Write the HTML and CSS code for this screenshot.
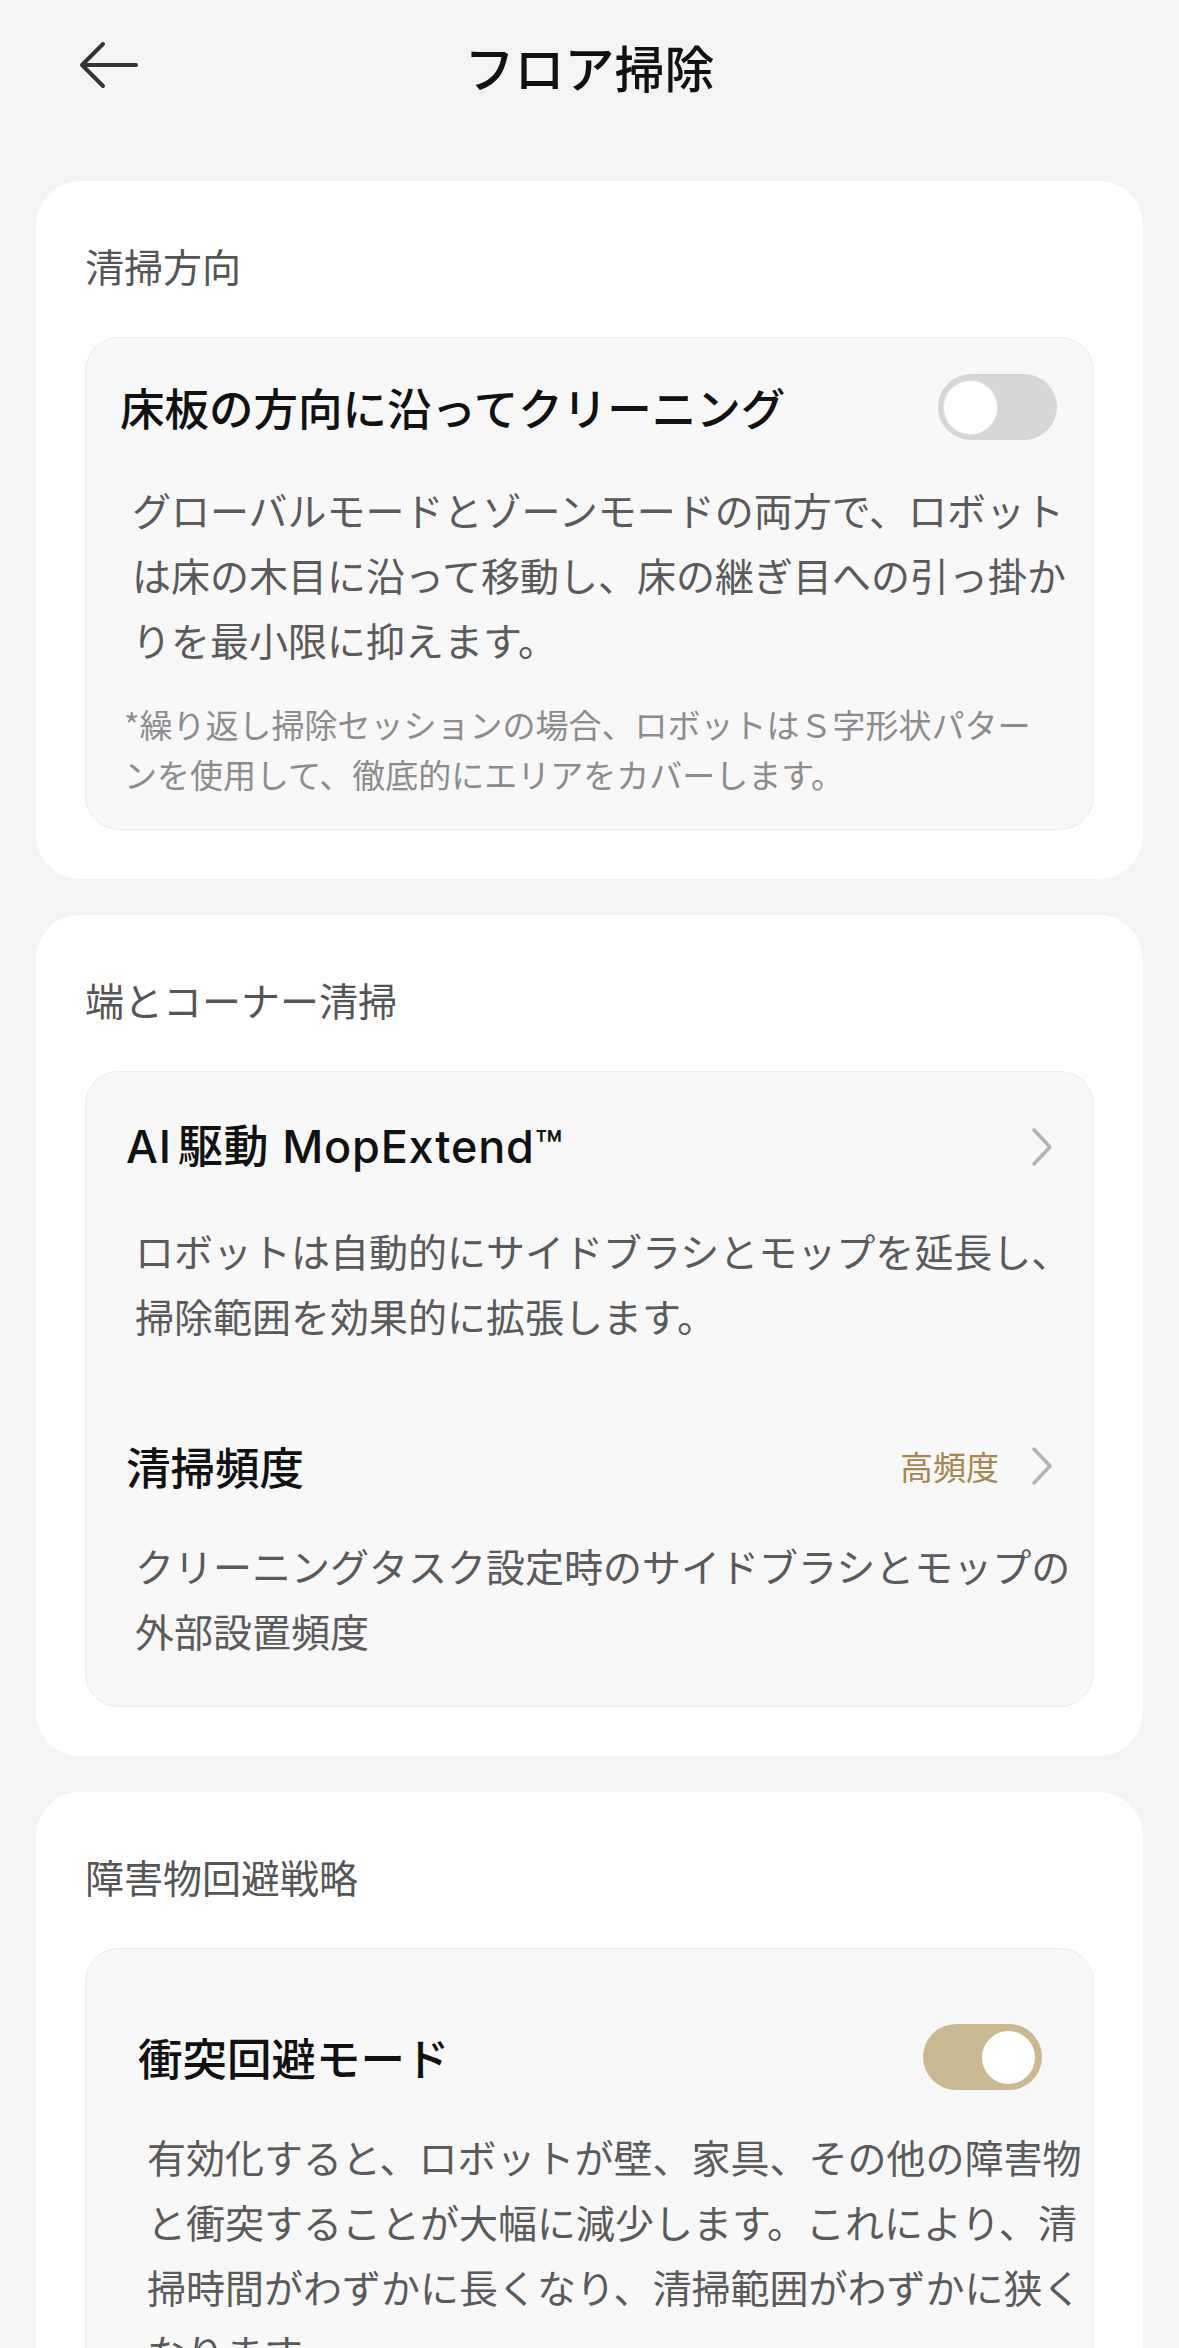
FILE: index.html
```html
<!DOCTYPE html>
<html lang="ja">
<head>
<meta charset="utf-8">
<title>フロア掃除</title>
<link rel="stylesheet" href="styles.css">
</head>
<body>
<header class="topbar">
  <div class="back">
    <svg width="62" height="50" viewBox="0 0 62 50" fill="none" stroke="#333" stroke-width="4" stroke-linecap="round" stroke-linejoin="round">
      <path d="M57 24H4"/>
      <path d="M24 3L3 24L24 45"/>
    </svg>
  </div>
  <h1 class="title">フロア掃除</h1>
  <div></div>
</header>

<main class="content">
  <section class="card">
    <h2 class="section-title">清掃方向</h2>
    <div class="panel panel-direction">
      <div class="row">
        <span class="row-title">床板の方向に沿ってクリーニング</span>
        <span class="toggle"><span class="knob"></span></span>
      </div>
      <p class="desc">グローバルモードとゾーンモードの両方で、ロボットは床の木目に沿って移動し、床の継ぎ目への引っ掛かりを最小限に抑えます。</p>
      <p class="note">*繰り返し掃除セッションの場合、ロボットはＳ字形状パターンを使用して、徹底的にエリアをカバーします。</p>
    </div>
  </section>

  <section class="card">
    <h2 class="section-title">端とコーナー清掃</h2>
    <div class="panel panel-edge">
      <div class="row">
        <span class="row-title latin">AI<span class="thin-gap">駆動</span> MopExtend™</span>
        <svg class="chev" width="22" height="40" viewBox="0 0 22 40" fill="none" stroke="#b3b3b3" stroke-width="3.5" stroke-linecap="round" stroke-linejoin="round"><path d="M3 3L19 20L3 37"/></svg>
      </div>
      <p class="desc">ロボットは自動的にサイドブラシとモップを延長し、掃除範囲を効果的に拡張します。</p>
      <div class="row row-second">
        <span class="row-title">清掃頻度</span>
        <span class="value">
          <span class="value-text">高頻度</span>
          <svg class="chev" width="22" height="40" viewBox="0 0 22 40" fill="none" stroke="#b3b3b3" stroke-width="3.5" stroke-linecap="round" stroke-linejoin="round"><path d="M3 3L19 20L3 37"/></svg>
        </span>
      </div>
      <p class="desc desc-second">クリーニングタスク設定時のサイドブラシとモップの外部設置頻度</p>
    </div>
  </section>

  <section class="card">
    <h2 class="section-title">障害物回避戦略</h2>
    <div class="panel panel-avoid">
      <div class="row">
        <span class="row-title">衝突回避モード</span>
        <span class="toggle on"><span class="knob"></span></span>
      </div>
      <p class="desc">有効化すると、ロボットが壁、家具、その他の障害物と衝突することが大幅に減少します。これにより、清掃時間がわずかに長くなり、清掃範囲がわずかに狭くなります。</p>
    </div>
  </section>
</main>
</body>
</html>
```

FILE: styles.css
```css
* {
  box-sizing: border-box;
}

html, body {
  margin: 0;
  padding: 0;
}

body {
  background: #f4f4f4;
  font-family: "Noto Sans CJK JP", "Noto Sans", sans-serif;
  color: #111;
}

.topbar {
  height: 132px;
  display: grid;
  grid-template-columns: 1fr auto 1fr;
  align-items: center;
  padding: 0 79px;
}

.back {
  display: flex;
  align-items: center;
  height: 50px;
}

.back svg {
  display: block;
}

.title {
  margin: 0;
  font-size: 50px;
  font-weight: 500;
  line-height: 60px;
  color: #111;
}

.content {
  display: flex;
  flex-direction: column;
  gap: 36px;
  padding: 49px 36px 0;
}

.card {
  background: #fff;
  border-radius: 44px;
  padding: 56px 49px 49px;
}

.section-title {
  margin: 0 0 44px;
  font-size: 39px;
  line-height: 56px;
  font-weight: 400;
  color: #555;
}

.panel {
  background: #f8f8f8;
  border: 1px solid #ececec;
  border-radius: 34px;
}

.row {
  display: flex;
  align-items: center;
  justify-content: space-between;
  height: 66px;
}

.row-title {
  font-size: 44.5px;
  font-weight: 500;
  color: #111;
  line-height: 66px;
  white-space: nowrap;
}

.row-title.latin {
  font-family: Inter, "Noto Sans CJK JP", sans-serif;
  font-size: 45px;
  letter-spacing: 0.8px;
}

.thin-gap {
  margin-left: 6px;
}

.desc {
  margin: 0;
  font-size: 39px;
  line-height: 65px;
  color: #5a5a5a;
}

.note {
  margin: 27px 0 0;
  font-size: 33px;
  line-height: 50px;
  color: #8c8c8c;
}

/* toggle */
.toggle {
  width: 119px;
  height: 66px;
  border-radius: 33px;
  background: #d6d6d6;
  display: flex;
  align-items: center;
  padding: 0 6px;
  flex-shrink: 0;
}

.toggle .knob {
  width: 53px;
  height: 53px;
  border-radius: 50%;
  background: #fff;
  box-shadow: 0 0 0 1px #e4e4e4;
}

.toggle.on {
  background: #cab892;
  justify-content: flex-end;
  padding: 0 7px;
}

.toggle.on .knob {
  box-shadow: none;
}

.chev {
  display: block;
  flex-shrink: 0;
}

.value {
  display: flex;
  align-items: center;
  gap: 32px;
}

.value-text {
  font-size: 33px;
  line-height: 50px;
  color: #a8864f;
}

/* panel 1 */
.panel-direction {
  padding: 36px 8px 30px 0;
}

.panel-direction .row {
  padding: 0 28px 0 34px;
}

.panel-direction .desc {
  margin-top: 37px;
  padding-left: 46px;
}

.panel-direction .note {
  padding-left: 38px;
  width: 960px;
}

/* panel 2 */
.panel-edge {
  padding: 42px 8px 43px 0;
}

.panel-edge .row {
  padding: 0 32px 0 40px;
}

.panel-edge .desc {
  margin-top: 38px;
  padding-left: 49px;
}

.panel-edge .row-second {
  margin-top: 85px;
}

.panel-edge .desc-second {
  margin-top: 34px;
}

/* panel 3 */
.panel-avoid {
  padding: 75px 0 60px 0;
}

.panel-avoid .row {
  padding: 0 51px 0 52px;
}

.panel-avoid .desc {
  margin-top: 34px;
  padding-left: 61px;
}
```
